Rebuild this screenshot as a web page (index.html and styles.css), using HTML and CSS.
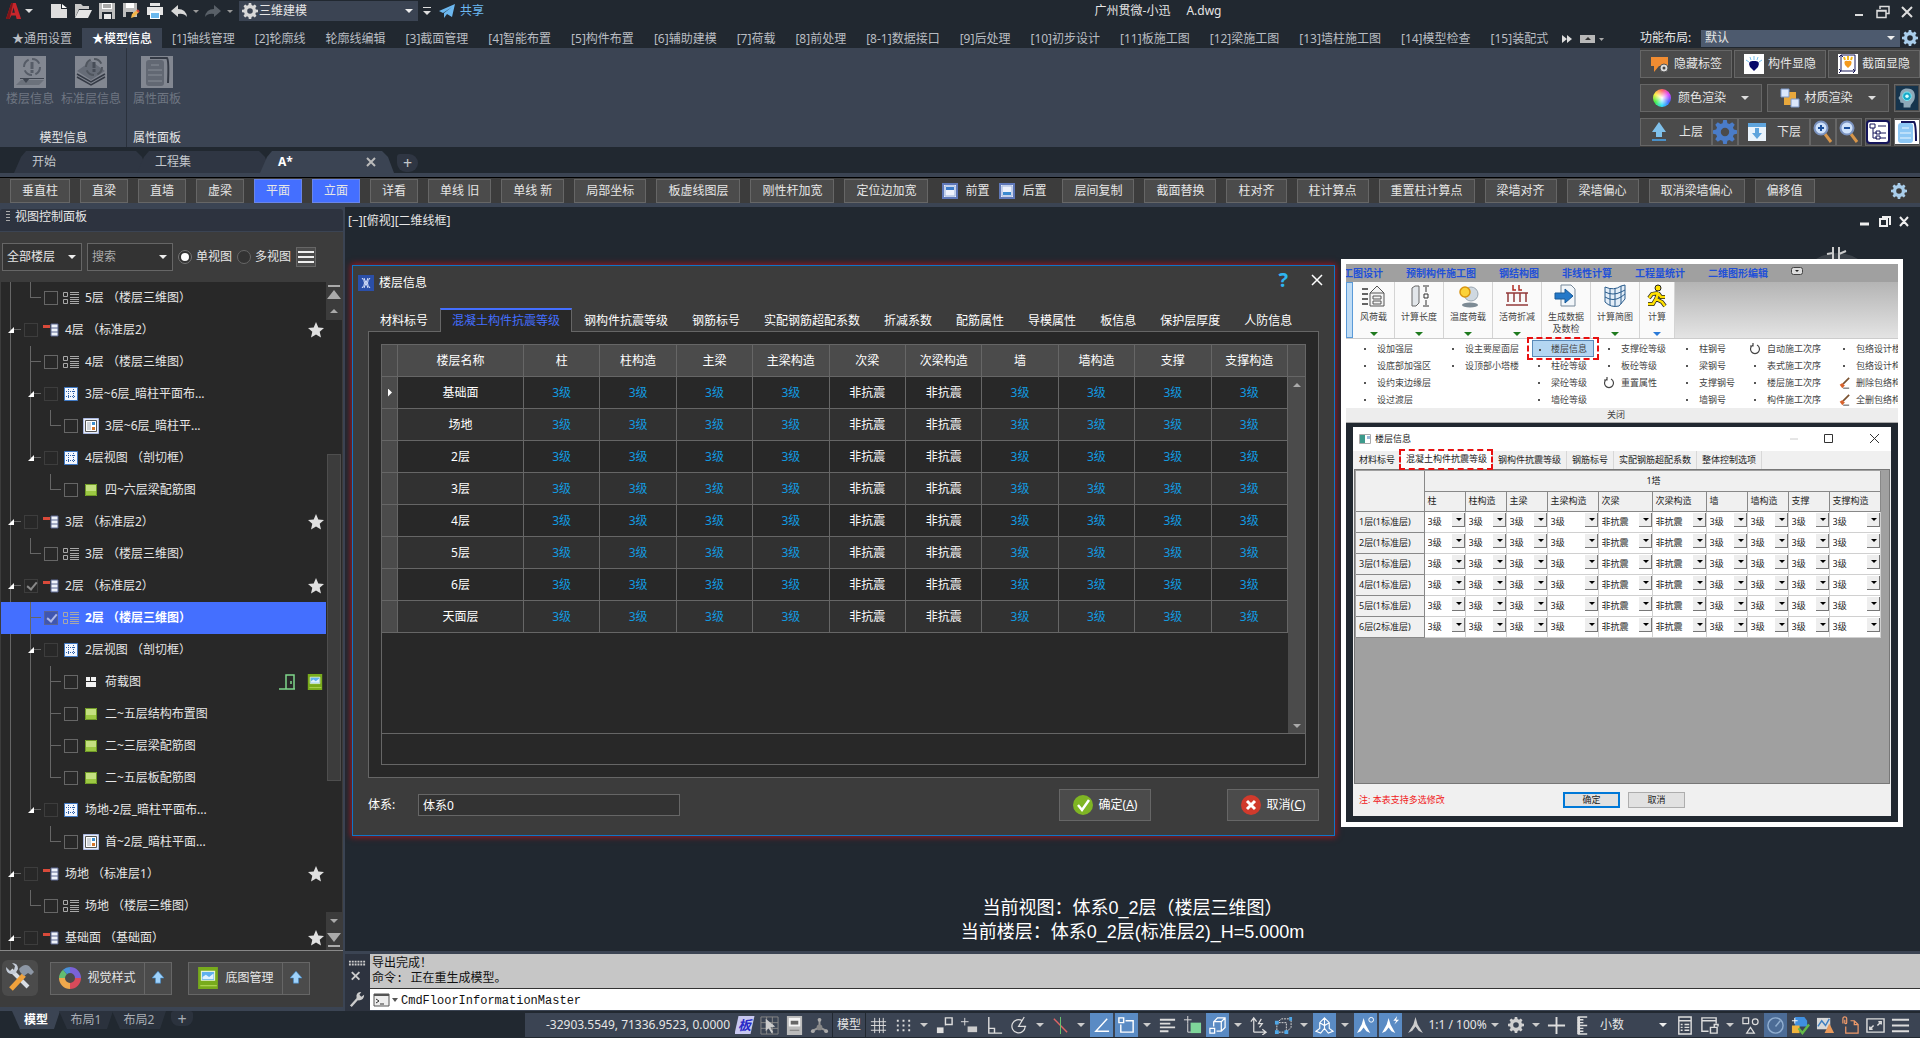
FILE: index.html
```html
<!DOCTYPE html>
<html lang="zh-CN">
<head>
    <meta charset="UTF-8">
    <meta name="viewport" content="width=device-width, initial-scale=1.0">
    <title>广州贯微-小迅 A.dwg</title>
    <link rel="stylesheet" href="styles.css">
</head>
<body>
    <!-- 图标 -->
    <svg class="sprite" aria-hidden="true">
        <symbol id="gear" viewBox="0 0 16 16"><path fill-rule="evenodd" d="M6.8 0h2.4l.4 2.1 1.4.6L12.8 1.500l1.700 1.700-1.200 1.800.6 1.400 2.100.4v2.400l-2.100.4-.6 1.400 1.200 1.800-1.700 1.700-1.800-1.200-1.400.6-.4 2.100H6.800l-.4-2.100-1.400-.6-1.800 1.200-1.700-1.700 1.200-1.800-.6-1.400L0 9.200V6.800l2.100-.4.6-1.400-1.200-1.800 1.700-1.700L5 2.700l1.400-.6zM8 5.200a2.800 2.800 0 1 0 0 5.600 2.800 2.800 0 0 0 0-5.600z"/></symbol>
        <symbol id="list" viewBox="0 0 16 14"><path d="M.5 1.500h4v4h-4zM.5 8.500h4v4h-4zM7 1.500h9M7 3.500h9M7 6.500h9M7 8.500h9M7 10.500h9M7 12.500h9" fill="none" stroke="#a8a8a8"/></symbol>
        <symbol id="floor" viewBox="0 0 16 14"><path d="M0 2h7v3H0z" fill="#d94a3a"/><path d="M8 1h7v12H8z" fill="#eef2fa" stroke="#5a6690"/><path d="M8 5h7M8 9h7" stroke="#5a6690"/></symbol>
        <symbol id="cut" viewBox="0 0 16 16"><path d="M1.500 1.500h13v13h-13z" fill="#f2f7ff" stroke="#3f79c4"/><path d="M3 5.500h10M3 10.500h10M5.500 3v10M10.500 3v10" stroke="#2c5fa8" stroke-dasharray="1 1"/></symbol>
        <symbol id="form" viewBox="0 0 16 16"><path d="M.5.5h15v15H.5z" fill="#e8edf8" stroke="#aab8e0"/><path d="M2.500 2.500h11v11h-11z" fill="#fff" stroke="#555"/><path d="M4 4h4v8H4z" fill="#cfd4da"/><path d="M9 4h3v3H9z" fill="#3c8ccc"/><path d="M9 9h3v3H9z" fill="#d4762c"/></symbol>
        <symbol id="green" viewBox="0 0 16 16"><path d="M2 2h12v12H2z" fill="#9cc843"/><path d="M3 3h10v6H3z" fill="#c4e080"/><path d="M2.500 2.500h11v11h-11z" fill="none" stroke="#6f9a26"/></symbol>
        <symbol id="load" viewBox="0 0 16 16"><path d="M3 3h4v4H3zM8 3h5v4H8zM3 8h10v5H3z" fill="#f2f2f2"/></symbol>
        <symbol id="star" viewBox="0 0 16 16"><path d="M8 0l2.300 5.400 5.700.5-4.300 3.800 1.300 5.800L8 12.400l-5 3.100 1.300-5.800L0 5.900l5.700-.5z" fill="#e0e0e0"/></symbol>
        <symbol id="photo" viewBox="0 0 20 20"><path d="M1 0h18v20H1z" fill="#78ab1c"/><path d="M3 17h15" stroke="#b5da5a" stroke-width="1"/><path d="M4 4h12v8H4z" fill="#5fb0ee" stroke="#e8f4d8"/><path d="M5 9l3-2 3 2 4-3v5H5z" fill="#dff1ff"/></symbol>
        <symbol id="uparrow" viewBox="0 0 14 16"><path d="M7 0l7 8h-4v6H4V8H0z" fill="#9fd2fb" stroke="#3e86c8" stroke-width=".7"/></symbol>
        <symbol id="glass" viewBox="0 0 20 24"><path d="M12 14l6 8" stroke="#d8964a" stroke-width="3"/><circle cx="8" cy="8" r="6.500" fill="#cfe2fb" stroke="#7b93c0" stroke-width="2"/></symbol>
        <symbol id="win" viewBox="0 0 16 16"><path d="M1 1h14v14H1z" fill="#e6ecfa" stroke="#5f78b8" stroke-width="2"/><path d="M3 3h10v10H3z" fill="#eef2fc" stroke="#9fb4dc"/></symbol>
        <symbol id="redo-ring" viewBox="0 0 12 12"><path d="M4 2a4.500 4.500 0 1 0 4 0M4 0v3h-3" fill="none" stroke="#444" stroke-width="1.200"/></symbol>
        <symbol id="broom" viewBox="0 0 14 14"><path d="M13 1L6 8" stroke="#7a5230" stroke-width="2"/><path d="M2 9l3-2 3 3-3 3z" fill="#d8622c"/><path d="M6 13h7" stroke="#333"/></symbol>
        <symbol id="plotman" viewBox="0 0 16 18"><path d="M8 1l2 7 5 8-4-2-3-4-3 4-4 2 5-8z" fill="currentColor"/></symbol>
    </svg>

    <div class="titlebar">
        <div class="quick">
            <svg class="logo" viewBox="0 0 18 18"><path d="M0 18L6 0h5l6 18h-5l-1-4H6l-2 4zM7 11h3L8.500 5z" fill="#c8262c"/><path d="M0 18L6 0h2L4 18z" fill="#7e1518"/></svg>
            <i class="caret"></i>
            <svg viewBox="0 0 18 16"><path d="M1 1h10v5h6v9H1z" fill="#dedede"/><path d="M12 1l5 4h-5z" fill="#fff"/></svg>
            <svg viewBox="0 0 18 16"><path d="M1 15V1h6l2 2h6v3H5z" fill="#c8c8c8"/><path d="M5 7h13l-4 8H1z" fill="#e6e6e6"/></svg>
            <svg viewBox="0 0 18 16"><path d="M1 0h16v16H1z" fill="#bdbdbd"/><path d="M4 0h10v6H4z" fill="#fff"/><path d="M5 2h8M5 4h8" stroke="#555"/><path d="M4 9h10v7H4z" fill="#212830"/><path d="M6 11h7v5H6z" fill="#e8e8e8"/></svg>
            <svg viewBox="0 0 18 16"><path d="M1 0h14v14H1z" fill="#bdbdbd"/><path d="M4 0h8v5H4z" fill="#fff"/><path d="M4 9h7v5H4z" fill="#212830"/><path d="M9 15l1-4 5-4 2 2-5 5z" fill="#f3b54a"/><path d="M15 7l2 2" stroke="#d94a3a" stroke-width="2"/></svg>
            <svg viewBox="0 0 18 16"><path d="M4 0h10v3H4zM1 4h16v8H1z" fill="#e4e4e4"/><path d="M4 8h10v8H4z" fill="#fff"/><path d="M5 10h8v5H5z" fill="#6cb9ee"/></svg>
            <svg viewBox="0 0 18 16"><path d="M1 8l7-6v4q8 0 9 8-3-4-9-3v3z" fill="#d8d8d8"/></svg>
            <i class="caret small"></i>
            <svg viewBox="0 0 18 16"><path d="M17 8l-7-6v4q-8 0-9 8 3-4 9-3v3z" fill="#596068"/></svg>
            <i class="caret small"></i>
        </div>
        <label class="combo workspace">
            <svg fill="#d8d8d8"><use href="#gear"/></svg>
            <select aria-label="工作空间"><option>三维建模</option></select>
        </label>
        <i class="caret bar"></i>
        <a href="#" class="share"><svg viewBox="0 0 16 14"><path d="M0 7L16 0l-3 13-5-3-3 4V9l8-6-9 6z" fill="#6cb8f0"/></svg>共享</a>
        <div class="title">广州贯微-小迅<span>A.dwg</span></div>
        <div class="win-buttons">
            <button aria-label="最小化"><svg viewBox="0 0 14 14"><path d="M3 10h8" stroke="#ddd" stroke-width="2"/></svg></button>
            <button aria-label="还原"><svg viewBox="0 0 14 14"><path d="M4 4V1.500h9v7h-3M1 5.500h9v7H1zM1 6h9" fill="none" stroke="#ddd" stroke-width="1.500"/></svg></button>
            <button aria-label="关闭"><svg viewBox="0 0 14 14"><path d="M2 2l10 10M12 2L2 12" stroke="#ddd" stroke-width="2"/></svg></button>
        </div>
    </div>

    <div class="ribbon">
        <div class="ribbon-left">
            <nav class="ribbon-tabs">
                <a href="#">★通用设置</a>
                <a href="#" class="active">★模型信息</a>
                <a href="#">[1]轴线管理</a>
                <a href="#">[2]轮廓线</a>
                <a href="#">轮廓线编辑</a>
                <a href="#">[3]截面管理</a>
                <a href="#">[4]智能布置</a>
                <a href="#">[5]构件布置</a>
                <a href="#">[6]辅助建模</a>
                <a href="#">[7]荷载</a>
                <a href="#">[8]前处理</a>
                <a href="#">[8-1]数据接口</a>
                <a href="#">[9]后处理</a>
                <a href="#">[10]初步设计</a>
                <a href="#">[11]板施工图</a>
                <a href="#">[12]梁施工图</a>
                <a href="#">[13]墙柱施工图</a>
                <a href="#">[14]模型检查</a>
                <a href="#">[15]装配式</a>
                <svg class="more" viewBox="0 0 42 10"><path d="M0 1l5 4-5 4zM5 1l5 4-5 4z" fill="#ddd"/><path d="M18 1h15v8H18z" fill="#b8b8b8"/><path d="M23 6l3-3 3 3z" fill="#333"/><path d="M37 4h5l-2.500 3z" fill="#aaa"/></svg>
            </nav>
            <div class="ribbon-body">
                <section class="ribbon-group">
                    <div class="tools">
                        <button disabled><svg viewBox="0 0 32 32"><path d="M0 0h32v32H0z" fill="#828791"/><circle cx="18" cy="11" r="8" fill="none" stroke="#565c67" stroke-width="2" stroke-dasharray="9 3.500"/><path d="M18 6v7M18 14v3" stroke="#565c67" stroke-width="3"/><path d="M7 24h23l-5 5H2z" fill="#6b717b"/><path d="M6 22.500h24" stroke="#3f4550"/><path d="M8 22h8l-4 5z" fill="#3f4550"/></svg>楼层信息</button>
                        <button disabled><svg viewBox="0 0 32 32"><path d="M0 0h32v32H0z" fill="#828791"/><path d="M16 5l14 10-14 9L2 15z" fill="#666c77"/><path d="M2 18l14 8 14-8M2 21l14 8 14-8" fill="none" stroke="#343a45" stroke-width="1.500"/><circle cx="19" cy="11" r="8" fill="none" stroke="#50565f" stroke-width="2" stroke-dasharray="9 3.500"/><path d="M19 6v6M19 13v3" stroke="#464c57" stroke-width="3"/></svg>标准层信息</button>
                    </div>
                    <h3>模型信息</h3>
                </section>
                <section class="ribbon-group">
                    <div class="tools">
                        <button disabled><svg viewBox="0 0 32 32"><path d="M0 0h32v32H0z" fill="#828791"/><path d="M9 2h17q2 2 1 25" fill="none" stroke="#343a45" stroke-width="2"/><rect x="5" y="4" width="18" height="26" rx="3" fill="#626873"/><path d="M10 9h8M7 14h14M7 19h14M7 25h14" stroke="#878d97"/></svg>属性面板</button>
                    </div>
                    <h3>属性面板</h3>
                </section>
            </div>
        </div>

        <aside class="display-panel">
            <div class="layout-line">
                <label for="layout">功能布局:</label>
                <div class="combo"><select id="layout"><option>默认</option></select></div>
                <svg fill="#a9cdea"><use href="#gear"/></svg>
            </div>
            <div class="panel-row">
                <button><svg viewBox="0 0 20 20"><path d="M1 3h17v9H9l-5 6v-6H1z" fill="#f08c32"/><circle cx="14" cy="14" r="4" fill="#ddd" stroke="#555"/><circle cx="14" cy="14" r="1.500" fill="#444"/></svg>隐藏标签</button>
                <button><svg viewBox="0 0 20 20"><path d="M0 0h20v20H0z" fill="#fff"/><path d="M10 17l-4-4q-3-7 4-6 7-1 4 6z" fill="#08086a"/><path d="M10 2v4M6 3l1 3M14 3l-1 3M2 6l3 2M18 6l-3 2" stroke="#79c2ef"/></svg>构件显隐</button>
                <button><svg viewBox="0 0 20 20"><path d="M0 0h20v20H0z" fill="#fff"/><path d="M3 1v16h14V1zM1 3l2-2 2 2M1 15l2 2-2 2M15 15l2 2-2 2" fill="none" stroke="#1a1a5a"/><path d="M10 14l-3-3q-2-5 3-4 5-1 3 4z" fill="#f59a1c"/><path d="M10 2v4M6 3l1 3M14 3l-1 3" stroke="#f5b81c" stroke-width="2"/></svg>截面显隐</button>
            </div>
            <div class="panel-row wide">
                <button><span class="wheel"></span>颜色渲染<i class="caret"></i></button>
                <button><svg viewBox="0 0 20 20"><path d="M4 4h12v13H4z" fill="#e8a83c"/><path d="M1 1h8v8H1zM11 11h8v8h-8z" fill="#dbe7fb" stroke="#7d98c8"/></svg>材质渲染<i class="caret"></i></button>
                <button class="square"><svg class="big" viewBox="0 0 26 28"><path d="M0 0h26v28H0z" fill="#16344c"/><path d="M13 3c8 0 10 6 9 11-1 6-5 6-5 11H9v-5c-3 0-4 0-4-3l-2-3 2-3C5 6 8 3 13 3z" fill="#8fa9b8"/><circle cx="13" cy="12" r="5" fill="#19a8c8" stroke="#7ff0f8"/><circle cx="13" cy="12" r="2" fill="#dff"/></svg></button>
            </div>
            <div class="panel-row floors">
                <button class="level"><svg viewBox="0 0 20 20"><path d="M10 0l7 10h-4v5H7v-5H3z" fill="#7fc0ea"/><path d="M3 18h14" stroke="#4a90c8" stroke-width="2"/></svg>上层</button>
                <button class="square"><svg class="big" fill="#4a7cc8"><use href="#gear"/></svg></button>
                <button class="level"><svg viewBox="0 0 20 20"><path d="M1 1h18v18H1z" fill="#eaf3fb"/><path d="M1 1h18v4H1z" fill="#5fa4dc"/><path d="M8 6h4v5h3l-5 6-5-6h3z" fill="#5fa4dc"/></svg>下层</button>
                <button class="square"><svg class="big" viewBox="0 0 20 24"><use href="#glass"/><path d="M5 8h6M8 5v6" stroke="#1c4f9a" stroke-width="2"/></svg></button>
                <button class="square"><svg class="big" viewBox="0 0 20 24"><use href="#glass"/><path d="M5 8h6" stroke="#1c4f9a" stroke-width="2"/></svg></button>
                <button class="square apart"><svg class="big" viewBox="0 0 24 24"><rect x="1" y="1" width="22" height="22" rx="3" fill="#fff" stroke="#14145a" stroke-width="2"/><path d="M4 4h5v4H4zM12 6h8M7 8v10h4M7 13h4M14 13h6M14 18h6M10 11h4v3h-4zM10 16h4v3h-4z" fill="none" stroke="#14145a"/></svg></button>
                <button class="square apart"><svg class="big" viewBox="0 0 24 24"><path d="M0 0h24v24H0z" fill="#fff"/><path d="M6 2h13q2 2 2 19" fill="none" stroke="#14145a" stroke-width="2"/><rect x="3" y="3" width="15" height="20" rx="3" fill="#8ec8f5"/><path d="M7 8h7M5 13h11M5 18h11" stroke="#eaf6ff"/></svg></button>
            </div>
        </aside>
    </div>

    <nav class="file-tabs">
        <a href="#">开始</a>
        <a href="#">工程集</a>
        <a href="#" class="active">A*<svg viewBox="0 0 10 10"><path d="M1 1l8 8M9 1L1 9" stroke="#bbb" stroke-width="2"/></svg></a>
        <button class="new-tab" aria-label="新建">+</button>
    </nav>

    <div class="toolbar">
        <button>垂直柱</button>
        <button>直梁</button>
        <button>直墙</button>
        <button>虚梁</button>
        <button class="on">平面</button>
        <button class="on">立面</button>
        <button>详看</button>
        <button>单线 旧</button>
        <button>单线 新</button>
        <button>局部坐标</button>
        <button>板虚线图层</button>
        <button>刚性杆加宽</button>
        <button>定位边加宽</button>
        <button class="flat"><svg viewBox="0 0 16 16"><use href="#win"/><path d="M4 4h8v3H4z" fill="#3a7ac8"/></svg>前置</button>
        <button class="flat"><svg viewBox="0 0 16 16"><use href="#win"/><path d="M4 9h8v3H4z" fill="#3a8ad0"/></svg>后置</button>
        <button class="after-flat">层间复制</button>
        <button>截面替换</button>
        <button>柱对齐</button>
        <button>柱计算点</button>
        <button>重置柱计算点</button>
        <button>梁墙对齐</button>
        <button>梁墙偏心</button>
        <button>取消梁墙偏心</button>
        <button>偏移值</button>
        <svg class="settings" fill="#a9cdea"><use href="#gear"/></svg>
    </div>

    <main class="workarea">
        <aside class="view-panel">
            <h2>视图控制面板</h2>
            <div class="filters">
                <div class="combo boxed"><select aria-label="楼层"><option>全部楼层</option></select></div>
                <div class="combo boxed search"><select aria-label="搜索"><option>搜索</option></select></div>
                <label><input type="radio" name="view" checked>单视图</label>
                <label><input type="radio" name="view">多视图</label>
                <button class="menu" aria-label="菜单"><i></i><i></i><i></i></button>
            </div>

            <div class="tree-box">
                <ul class="tree">
                    <li>
                        <ul>
                            <li><div class="row"><span class="exp"></span><label><input type="checkbox"><svg><use href="#list"/></svg>5层 （楼层三维图）</label></div></li>
                        </ul>
                    </li>
                    <li>
                        <div class="row"><button class="exp"></button><label><input type="checkbox" disabled><svg><use href="#floor"/></svg>4层 （标准层2）</label><svg class="star"><use href="#star"/></svg></div>
                        <ul>
                            <li><div class="row"><span class="exp"></span><label><input type="checkbox"><svg><use href="#list"/></svg>4层 （楼层三维图）</label></div></li>
                            <li>
                                <div class="row"><button class="exp"></button><label><input type="checkbox" disabled><svg><use href="#cut"/></svg>3层~6层_暗柱平面布...</label></div>
                                <ul>
                                    <li><div class="row"><span class="exp"></span><label><input type="checkbox"><svg><use href="#form"/></svg>3层~6层_暗柱平...</label></div></li>
                                </ul>
                            </li>
                            <li>
                                <div class="row"><button class="exp"></button><label><input type="checkbox" disabled><svg><use href="#cut"/></svg>4层视图 （剖切框）</label></div>
                                <ul>
                                    <li><div class="row"><span class="exp"></span><label><input type="checkbox"><svg><use href="#green"/></svg>四~六层梁配筋图</label></div></li>
                                </ul>
                            </li>
                        </ul>
                    </li>
                    <li>
                        <div class="row"><button class="exp"></button><label><input type="checkbox" disabled><svg><use href="#floor"/></svg>3层 （标准层2）</label><svg class="star"><use href="#star"/></svg></div>
                        <ul>
                            <li><div class="row"><span class="exp"></span><label><input type="checkbox"><svg><use href="#list"/></svg>3层 （楼层三维图）</label></div></li>
                        </ul>
                    </li>
                    <li>
                        <div class="row"><button class="exp"></button><label><input type="checkbox" disabled checked><svg><use href="#floor"/></svg>2层 （标准层2）</label><svg class="star"><use href="#star"/></svg></div>
                        <ul>
                            <li><div class="row selected"><span class="exp"></span><label><input type="checkbox" checked><svg><use href="#list"/></svg>2层 （楼层三维图）</label></div></li>
                            <li>
                                <div class="row"><button class="exp"></button><label><input type="checkbox" disabled><svg><use href="#cut"/></svg>2层视图 （剖切框）</label></div>
                                <ul>
                                    <li><div class="row"><span class="exp"></span><label><input type="checkbox"><svg><use href="#load"/></svg>荷载图</label>
                                        <span class="row-icons">
                                            <svg viewBox="0 0 16 16"><path d="M7 15V1h8v14M12 7v3M0 15h16" fill="none" stroke="#7fd68a" stroke-width="1.500"/></svg>
                                            <svg><use href="#photo"/></svg>
                                        </span></div></li>
                                    <li><div class="row"><span class="exp"></span><label><input type="checkbox"><svg><use href="#green"/></svg>二~五层结构布置图</label></div></li>
                                    <li><div class="row"><span class="exp"></span><label><input type="checkbox"><svg><use href="#green"/></svg>二~三层梁配筋图</label></div></li>
                                    <li><div class="row"><span class="exp"></span><label><input type="checkbox"><svg><use href="#green"/></svg>二~五层板配筋图</label></div></li>
                                </ul>
                            </li>
                            <li>
                                <div class="row"><button class="exp"></button><label><input type="checkbox" disabled><svg><use href="#cut"/></svg>场地-2层_暗柱平面布...</label></div>
                                <ul>
                                    <li><div class="row"><span class="exp"></span><label><input type="checkbox"><svg><use href="#form"/></svg>首~2层_暗柱平面...</label></div></li>
                                </ul>
                            </li>
                        </ul>
                    </li>
                    <li>
                        <div class="row"><button class="exp"></button><label><input type="checkbox" disabled><svg><use href="#floor"/></svg>场地 （标准层1）</label><svg class="star"><use href="#star"/></svg></div>
                        <ul>
                            <li><div class="row"><span class="exp"></span><label><input type="checkbox"><svg><use href="#list"/></svg>场地 （楼层三维图）</label></div></li>
                        </ul>
                    </li>
                    <li>
                        <div class="row"><button class="exp"></button><label><input type="checkbox" disabled><svg><use href="#floor"/></svg>基础面 （基础面）</label><svg class="star"><use href="#star"/></svg></div>
                    </li>
                </ul>
                <div class="scroll">
                    <svg viewBox="0 0 16 38"><path d="M2 4h12" stroke="#aaa" stroke-width="2"/><path d="M1 17l7-9 7 9zM4 31l4-4 4 4z" fill="#aaa"/></svg>
                    <div class="track"><div class="thumb"></div></div>
                    <svg viewBox="0 0 16 38"><path d="M4 7h8l-4 4zM1 21h14l-7 9z" fill="#aaa"/><path d="M2 34h12" stroke="#aaa" stroke-width="2"/></svg>
                </div>
            </div>

            <div class="view-buttons">
                <button class="wrench" aria-label="工具"><svg viewBox="0 0 30 30"><path d="M6 7l17 17" stroke="#d8dde4" stroke-width="4"/><path d="M1 4l4 4 4-1 1-4-3-3q6 0 6 6l-3 5H6Q1 10 1 4z" fill="#c4ccd8"/><path d="M19 12L6 26" stroke="#f0a23c" stroke-width="5"/><path d="M14 6q5-6 10-3l5 6-3 3-3-2-4 3-4-4z" fill="#8d97a5"/></svg></button>
                <div class="split">
                    <button><svg viewBox="0 0 22 22"><g fill="none" stroke-width="6"><path d="M11 3a8 8 0 0 1 8 8" stroke="#7a62d8"/><path d="M19 11a8 8 0 0 1-8 8" stroke="#d84a5a"/><path d="M11 19a8 8 0 0 1-8-8" stroke="#efa84c"/><path d="M3 11a8 8 0 0 1 3-6" stroke="#62bd72"/><path d="M6 5a8 8 0 0 1 5-2" stroke="#4a90d8"/></g></svg>视觉样式</button>
                    <button class="up" aria-label="展开"><svg><use href="#uparrow"/></svg></button>
                </div>
                <div class="split">
                    <button><svg><use href="#photo"/></svg>底图管理</button>
                    <button class="up" aria-label="展开"><svg><use href="#uparrow"/></svg></button>
                </div>
            </div>
        </aside>

        <div class="center">
            <div class="canvas">
                <div class="view-head">
                    <span>[−][俯视][二维线框]</span>
                    <svg viewBox="0 0 52 14"><path d="M1 10h9" stroke="#eee" stroke-width="3"/><path d="M21 5h7v7h-7zM23 3h8v8M41 3l8 9M49 3l-8 9" fill="none" stroke="#eee" stroke-width="2"/></svg>
                </div>
                <svg class="compass" viewBox="0 0 80 80"><circle cx="40" cy="46" r="40" fill="#3c4249"/><path d="M36 0v14M42 0v14M36 6l-6 1M42 7l7-3" stroke="#ccc" stroke-width="2"/></svg>
                <div class="view-note">
                    <p>当前视图：体系0_2层（楼层三维图）</p>
                    <p>当前楼层：体系0_2层(标准层2)_H=5.000m</p>
                </div>

                <div class="dialog" role="dialog" aria-labelledby="dlg-title">
                    <div class="dlg-title">
                        <svg viewBox="0 0 16 16"><path d="M0 0h16v16H0z" fill="#2b4fa8"/><path d="M4 3q5 5 0 10M12 3q-5 5 0 10M6 3l4 10M10 3L6 13" fill="none" stroke="#dfe8ff"/></svg>
                        <h2 id="dlg-title">楼层信息</h2>
                        <button class="help" aria-label="帮助">?</button>
                        <button aria-label="关闭"><svg viewBox="0 0 12 12"><path d="M1 1l10 10M11 1L1 11" stroke="#fff" stroke-width="1.500"/></svg></button>
                    </div>
                    <nav class="dlg-tabs">
                        <a href="#">材料标号</a>
                        <a href="#" class="active">混凝土构件抗震等级</a>
                        <a href="#">钢构件抗震等级</a>
                        <a href="#">钢筋标号</a>
                        <a href="#">实配钢筋超配系数</a>
                        <a href="#">折减系数</a>
                        <a href="#">配筋属性</a>
                        <a href="#">导模属性</a>
                        <a href="#">板信息</a>
                        <a href="#">保护层厚度</a>
                        <a href="#">人防信息</a>
                    </nav>
                    <div class="dlg-body">
                        <div class="grid-box">
                            <div class="grid-view">
                                <table class="levels">
                                    <thead>
                                        <tr><th class="mark"></th><th class="name">楼层名称</th><th>柱</th><th>柱构造</th><th>主梁</th><th>主梁构造</th><th>次梁</th><th>次梁构造</th><th>墙</th><th>墙构造</th><th>支撑</th><th>支撑构造</th></tr>
                                    </thead>
                                    <tbody id="levels"></tbody>
                                </table>
                                <div class="grid-scroll"><i></i><i class="down"></i></div>
                            </div>
                            <div class="grid-foot"></div>
                        </div>
                    </div>
                    <div class="dlg-foot">
                        <label for="system">体系:</label>
                        <input type="text" id="system" value="体系0">
                        <button class="ok"><svg viewBox="0 0 20 20"><circle cx="10" cy="10" r="10" fill="#7fb524"/><path d="M5 10l4 5 7-10" fill="none" stroke="#fff" stroke-width="2.500"/></svg><span>确定(<u>A</u>)</span></button>
                        <button><svg viewBox="0 0 20 20"><circle cx="10" cy="10" r="10" fill="#d13a2c"/><path d="M6 6l8 8M14 6l-8 8" stroke="#fff" stroke-width="3"/></svg><span>取消(<u>C</u>)</span></button>
                    </div>
                </div>

                <div class="inset">
                    <div class="in-tabs">
                        <span>工图设计</span><span>预制构件施工图</span><span>钢结构图</span><span>非线性计算</span><span>工程量统计</span><span>二维图形编辑</span>
                        <svg viewBox="0 0 12 8"><rect x=".5" y=".5" width="11" height="7" rx="2" fill="#ddd" stroke="#444"/><path d="M4 3h4L6 5z" fill="#222"/></svg>
                    </div>
                    <div class="in-ribbon">
                        <i class="in-on"></i>
                        <button class="first"><svg viewBox="0 0 24 24"><path d="M8 22V9l7-7 7 7v13zM8 9h14M11 12h8v3h-8zM11 17h8v3h-8z" fill="#f4f4f4" stroke="#555"/><path d="M0 5h6M0 10h6M0 15h6M0 20h6" stroke="#333" stroke-width="1.500"/></svg>风荷载<i></i></button>
                        <button><svg viewBox="0 0 24 24"><path d="M5 4l3-2h4v17l-3 3H5z" fill="#e2e6ea" stroke="#666"/><path d="M16 2h6M16 22h6M19 3v5M19 16v5M17 10h4v4h-4z" fill="none" stroke="#333"/></svg>计算长度<i></i></button>
                        <button><svg viewBox="0 0 24 24"><ellipse cx="14" cy="21" rx="8" ry="2.500" fill="#7c8a94"/><circle cx="15" cy="10" r="7" fill="#cfd8e0" stroke="#9aa6b0"/><circle cx="9" cy="8" r="5" fill="#fbd23a" stroke="#d89410" stroke-width="1.500"/></svg>温度荷载<i></i></button>
                        <button><svg viewBox="0 0 24 24"><path d="M8 1v5h3M14 1v5h3" fill="none" stroke="#b02a20" stroke-width="1.500"/><path d="M1 9h22M3 9v9M9 9v9M15 9v9M21 9v9M1 21h22" stroke="#933a3a" stroke-width="1.500"/></svg>活荷折减<i></i></button>
                        <button><svg viewBox="0 0 24 24"><path d="M7 1h10l4 4v17H7z" fill="#f2f6fa" stroke="#789"/><path d="M1 9h10V5l8 7-8 7v-4H1z" fill="#2478c8" stroke="#185a98"/></svg>生成数据<br>及数检</button>
                        <button><svg viewBox="0 0 24 24"><path d="M2 3q9 4 16-1l4-1v14l-6 7Q8 24 2 18z" fill="#e4eef8" stroke="#2a5c8c"/><path d="M2 8q8 4 16 0l4-2M2 13q8 5 16 0l4-3M7 4v17M12 4v18M18 2v18" fill="none" stroke="#2a5c8c"/></svg>计算简图<i></i></button>
                        <button class="last"><svg viewBox="0 0 24 24"><circle cx="13" cy="4" r="3" fill="#ffe000" stroke="#222"/><path d="M13 9l-6 1-3 4M13 9l3 4h4M13 10l-2 5 6 3 3 4M11 15l-3 5H3" fill="none" stroke="#222" stroke-width="4"/><path d="M13 9l-6 1-3 4M13 9l3 4h4M13 10l-2 5 6 3 3 4M11 15l-3 5H3" fill="none" stroke="#ffe000" stroke-width="2.500"/></svg>计算<i class="blue"></i></button>
                    </div>
                    <div class="in-lists">
                        <ul><li>设加强层</li><li>设底部加强区</li><li>设约束边缘层</li><li>设过渡层</li></ul>
                        <ul><li>设主要屋面层</li><li>设顶部小塔楼</li></ul>
                        <ul><li class="hot">楼层信息</li><li>柱砼等级</li><li>梁砼等级</li><li>墙砼等级</li></ul>
                        <ul><li>支撑砼等级</li><li>板砼等级</li><li class="pic"><svg><use href="#redo-ring"/></svg>重置属性</li></ul>
                        <ul><li>柱钢号</li><li>梁钢号</li><li>支撑钢号</li><li>墙钢号</li></ul>
                        <ul><li class="pic"><svg><use href="#redo-ring"/></svg>自动施工次序</li><li>表式施工次序</li><li>楼层施工次序</li><li>构件施工次序</li></ul>
                        <ul><li>包络设计楼</li><li>包络设计构</li><li class="pic"><svg><use href="#broom"/></svg>删除包络构</li><li class="pic"><svg><use href="#broom"/></svg>全删包络构</li></ul>
                    </div>
                    <div class="in-close">关闭</div>
                    <div class="in-stage">
                        <div class="in-dialog">
                            <div class="in-title">
                                <svg viewBox="0 0 12 10"><path d="M.5.5h11v9H.5z" fill="#fff" stroke="#aaa"/><path d="M1 1h5v8H1z" fill="#3c9a8c"/><path d="M8 2h3v3H8z" fill="#9ab8d8"/></svg>
                                <span>楼层信息</span>
                                <svg class="ctl" viewBox="0 0 90 12"><path d="M0 6h8" stroke="#ccc"/><path d="M34.500 1.500h8v8h-8zM80 1l9 9M89 1l-9 9" fill="none" stroke="#333"/></svg>
                            </div>
                            <div class="in-dtabs"><span>材料标号</span><span class="hot">混凝土构件抗震等级</span><span>钢构件抗震等级</span><span>钢筋标号</span><span>实配钢筋超配系数</span><span>整体控制选项</span></div>
                            <div class="in-grid">
                                <table>
                                    <colgroup><col class="c-name"><col><col><col><col class="c-mid"><col class="c-wide"><col class="c-wide"><col><col><col><col class="c-mid"></colgroup>
                                    <thead>
                                        <tr><th rowspan="2"></th><th colspan="10" class="tower">1塔</th></tr>
                                        <tr><th>柱</th><th>柱构造</th><th>主梁</th><th>主梁构造</th><th>次梁</th><th>次梁构造</th><th>墙</th><th>墙构造</th><th>支撑</th><th>支撑构造</th></tr>
                                    </thead>
                                    <tbody id="old-levels"></tbody>
                                </table>
                            </div>
                            <div class="in-foot">
                                <span>注: 本表支持多选修改</span>
                                <button class="default">确定</button>
                                <button>取消</button>
                            </div>
                        </div>
                    </div>
                </div>
            </div>

            <div class="command">
                <svg class="cmd-side" viewBox="0 0 26 60"><path d="M4 8h18M4 11h18" stroke="#ccc" stroke-width="2" stroke-dasharray="2 1"/><path d="M7 19l8 8M15 19l-8 8" stroke="#ccc" stroke-width="2"/><path d="M6 55l8-9" stroke="#ccc" stroke-width="2.500"/><path d="M12 46q-1-6 5-6l-2 3 2 2 3-2q0 6-6 6z" fill="#ccc"/></svg>
                <div class="cmd-main">
                    <div class="cmd-log"><p>导出完成！</p><p>命令: 正在重生成模型。</p></div>
                    <div class="cmd-line">
                        <svg viewBox="0 0 26 14"><path d="M1 1h15v12H1z" fill="#eee" stroke="#555"/><path d="M1 2h15" stroke="#555" stroke-width="2"/><path d="M3 6l3 2-3 2M7 11h4" fill="none" stroke="#333"/><path d="M19 5h6l-3 4z" fill="#555"/></svg>
                        <input type="text" aria-label="命令" value="CmdFloorInformationMaster">
                    </div>
                </div>
            </div>
        </div>
    </main>

    <footer class="status">
        <nav class="layouts">
            <a href="#" class="active">模型</a>
            <a href="#">布局1</a>
            <a href="#">布局2</a>
            <button aria-label="新建布局">+</button>
        </nav>
        <div class="status-items">
            <span class="coords">-32903.5549, 71336.9523, 0.0000</span>
            <span class="cell"><b class="slab">板</b></span>
            <span class="cell"><svg viewBox="0 0 20 20"><path d="M1 1h18v18H1zM7 1v18M13 1v18M1 7h18M1 13h18" fill="none" stroke="#888"/><path d="M6 3l10 8-5 1 3 5-2 1-3-5-3 3z" fill="#ccc"/></svg></span>
            <span class="cell"><svg viewBox="0 0 20 20"><path d="M2 0h16v20H2z" fill="#bbb"/><path d="M4 2h12v9H4z" fill="#f4f4f4"/><path d="M6 5h8v4H6z" fill="#666"/><path d="M5 15h10" stroke="#777"/></svg></span>
            <span class="cell"><svg viewBox="0 0 20 20"><path d="M10 3v9l-8 4M10 12l8 4" fill="none" stroke="#999" stroke-width="2"/><circle cx="10" cy="4" r="2" fill="#aaa"/><circle cx="10" cy="12" r="3" fill="#888"/><circle cx="3" cy="16" r="2" fill="#aaa"/><circle cx="17" cy="16" r="2" fill="#aaa"/></svg></span>
            <span class="word">模型</span>
            <span class="cell"><svg viewBox="0 0 20 20"><path d="M6 2v16M11 2v16M15 2v16M2 6h16M2 10h16M2 15h16" stroke="#ddd"/></svg></span>
            <span class="cell"><svg viewBox="0 0 20 20"><path d="M3 5h14M3 10h14M3 15h14" stroke="#ddd" stroke-width="2" stroke-dasharray="2 4"/></svg></span>
            <span class="drop"></span>
            <span class="cell"><svg viewBox="0 0 20 20"><path d="M11 10V2h7v7h-7" fill="none" stroke="#ddd" stroke-width="1.500"/><path d="M2 12h7v6H2z" fill="#ddd"/></svg></span>
            <span class="cell"><svg viewBox="0 0 20 20"><path d="M1 6h8M5 2v8" stroke="#ddd"/><path d="M8 11h10v6H8z" fill="#ccc"/></svg></span>
            <span class="cell"><svg viewBox="0 0 20 20"><path d="M4 1v17h14M4 13h6v5" fill="none" stroke="#ddd" stroke-width="1.500"/></svg></span>
            <span class="cell"><svg viewBox="0 0 20 20"><path d="M13 5a7 7 0 1 0 3 6M17 11H9l6-10" fill="none" stroke="#ddd" stroke-width="1.300"/></svg></span>
            <span class="drop"></span>
            <span class="cell"><svg viewBox="0 0 20 20"><path d="M3 3l14 14" stroke="#e06464" stroke-width="1.500"/><path d="M10 1v18" stroke="#6cc870"/></svg></span>
            <span class="drop"></span>
            <span class="cell on"><svg viewBox="0 0 20 20"><path d="M16 3L4 16h14" fill="none" stroke="#fff" stroke-width="1.500"/></svg></span>
            <span class="cell on"><svg viewBox="0 0 20 20"><path d="M4 9v8h13V5H9M2 2h5v5H2z" fill="none" stroke="#fff" stroke-width="1.500"/></svg></span>
            <span class="drop"></span>
            <span class="cell"><svg viewBox="0 0 20 20"><path d="M2 4h16M2 8h11M2 12h16M2 16h9" stroke="#ddd" stroke-width="2"/></svg></span>
            <span class="cell"><svg viewBox="0 0 20 20"><path d="M1 4h8M5 0v8M5 8v9h4" fill="none" stroke="#ddd"/><path d="M8 7h11v11H8z" fill="#7fd69a"/></svg></span>
            <span class="cell on"><svg viewBox="0 0 20 20"><path d="M6 11V6l4-4h8v10l-4 4H9M6 6h8v10M14 6l4-4M2 13h5v5H2z" fill="none" stroke="#fff" stroke-width="1.300"/></svg></span>
            <span class="drop"></span>
            <span class="cell"><svg viewBox="0 0 20 20"><path d="M5 17V3M2 6l3-4 3 4M5 17h12M14 14l4 3-4 3M13 3l-3 5h4l-3 4" fill="none" stroke="#ddd" stroke-width="1.300"/></svg></span>
            <span class="cell"><svg viewBox="0 0 20 20"><path d="M3 7v10h10V7zM3 7l5-4h10v9l-5 5" fill="none" stroke="#ddd" stroke-dasharray="2 1"/><path d="M1 5h4v4H1zM11 15h4v4h-4zM16 1h3v4h-3zM1 15h4v4H1z" fill="#4fa8e8"/></svg></span>
            <span class="drop"></span>
            <span class="cell on"><svg viewBox="0 0 20 20"><path d="M10 2l5 5v6l4 3-5 2-4-5-4 5-5-2 4-3V7zM10 2v11M5 7l5 3 5-3" fill="none" stroke="#fff" stroke-width="1.200"/></svg></span>
            <span class="drop"></span>
            <span class="cell on"><svg viewBox="0 0 20 20"><path d="M8 2l2 7 5 9-4-2-3-4-3 4-4 2 5-9z" fill="#fff"/><circle cx="16" cy="4" r="2.500" fill="none" stroke="#fff"/></svg></span>
            <span class="cell on"><svg viewBox="0 0 20 20"><path d="M8 2l2 7 5 9-4-2-3-4-3 4-4 2 5-9zM17 0l-4 5h3l-2 4 5-5h-3z" fill="#fff"/></svg></span>
            <span class="cell light"><svg><use href="#plotman"/></svg></span>
            <span class="word scale">1:1 / 100%</span>
            <span class="drop"></span>
            <span class="cell"><svg class="g16" fill="#d0d0d0"><use href="#gear"/></svg></span>
            <span class="drop"></span>
            <span class="cell"><svg viewBox="0 0 20 20"><path d="M1 10h18M10 1v18" stroke="#ddd" stroke-width="2"/></svg></span>
            <span class="cell"><svg viewBox="0 0 20 20"><path d="M6 1h10M6 4h6M6 7h6M6 10h10M6 13h6M6 16h6M6 19h10" stroke="#ddd" stroke-width="1.500"/><path d="M7 1v18" stroke="#ddd" stroke-width="3"/></svg></span>
            <div class="combo units"><select aria-label="单位"><option>小数</option></select></div>
            <span class="cell"><svg viewBox="0 0 20 20"><path d="M4 1h13v18H4zM4 5h13M6 9h2M10 9h5M6 12h2M10 12h5M6 15h2M10 15h5" fill="none" stroke="#ddd" stroke-width="1.500"/></svg></span>
            <span class="cell"><svg viewBox="0 0 20 20"><path d="M9 16H2V2h15v6M2 5h15M11 12h7v6h-7zM15 12V9h4v2" fill="none" stroke="#ddd" stroke-width="1.500"/></svg></span>
            <span class="drop"></span>
            <span class="cell"><svg viewBox="0 0 20 20"><path d="M2 2h6v6H2zM6 18l4-6 4 6z" fill="none" stroke="#ddd" stroke-width="1.300"/><circle cx="15" cy="6" r="3" fill="none" stroke="#ddd" stroke-width="1.300"/></svg></span>
            <span class="cell on dim"><svg viewBox="0 0 20 20"><circle cx="10" cy="10" r="8" fill="none" stroke="#91aecf" stroke-width="1.500"/><path d="M10 11l5-6" stroke="#91aecf" stroke-width="1.500"/></svg></span>
            <span class="cell"><svg viewBox="0 0 20 20"><path d="M4 1h10l3 4v6H4z" fill="#3f8fe0"/><path d="M1 10h8v8H1z" fill="#f0b43c"/><path d="M8 13l4 5 7-9" fill="none" stroke="#62b848" stroke-width="2.500"/><path d="M1 5h6M4 2v6" stroke="#fff"/></svg></span>
            <span class="cell"><svg viewBox="0 0 20 20"><path d="M1 2h14v12H1z" fill="#d8d8d8"/><path d="M2 11l4-6 4 5 4-7" fill="none" stroke="#3f7fc0" stroke-width="1.500"/><path d="M14 8l5 10H9z" fill="#e89a5c"/></svg></span>
            <span class="cell"><svg viewBox="0 0 20 20"><path d="M5 11v7h13V9l-4-4h-4M14 5v4h4M2 8V3q0-2 2-2t2 2v4q0 1-1 1t-1-1V4" fill="none" stroke="#ef9a6a" stroke-width="1.300"/></svg></span>
            <span class="cell"><svg viewBox="0 0 20 20"><path d="M1 3h18v14H1zM4 11v3h3M16 9V6h-3M5 13l3-3M15 7l-3 3" fill="none" stroke="#ddd" stroke-width="1.500"/></svg></span>
            <span class="cell"><svg viewBox="0 0 20 20"><path d="M1 4h18M1 10h18M1 16h18" stroke="#ddd" stroke-width="2"/></svg></span>
        </div>
    </footer>

    <script src="script.js"></script>
</body>
</html>
```
FILE: styles.css
```css
* {
    box-sizing: border-box;
}

body {
    display: flex;
    flex-direction: column;
    height: 100vh;
    margin: 0;
    overflow: hidden;
    background-color: #3b4453;
    color: #e6e6e6;
    font-family: "Noto Sans", "Noto Sans CJK SC", sans-serif;
    font-size: 12px;
    line-height: 16px;
    white-space: nowrap;
}

button, input, select {
    font: inherit;
    color: inherit;
    margin: 0;
}

button {
    display: flex;
    align-items: center;
    justify-content: center;
    padding: 0;
    border: 1px solid #666;
    background-color: #4b4b4b;
}

a {
    color: inherit;
    text-decoration: none;
}

h2, h3, p, ul {
    margin: 0;
    padding: 0;
    font-size: inherit;
    font-weight: normal;
    list-style: none;
}

svg {
    flex: none;
    width: 16px;
    height: 16px;
}

.sprite {
    position: absolute;
    width: 0;
    height: 0;
}

/* 下拉框 */
.combo {
    position: relative;
    display: flex;
    align-items: center;
}

.combo select {
    appearance: none;
    flex: 1;
    min-width: 0;
    height: 100%;
    padding: 0 4px;
    border: none;
    background: none;
    outline: none;
}

.combo::after {
    content: "";
    position: absolute;
    right: 5px;
    top: 50%;
    margin-top: -2px;
    border: 4px solid transparent;
    border-top-color: #eee;
    border-bottom: none;
    pointer-events: none;
}

.caret {
    border: 4px solid transparent;
    border-top-color: #ddd;
    border-bottom: none;
}

.caret.small {
    border-width: 3px;
    border-top-color: #999;
    border-bottom: none;
}

.caret.bar {
    position: relative;
    margin: 4px 0 0 5px;
}

.caret.bar::before {
    content: "";
    position: absolute;
    left: -4px;
    top: -8px;
    width: 8px;
    border-top: 1px solid #ddd;
}

/* 标题栏 */
.titlebar {
    display: flex;
    align-items: center;
    height: 28px;
    padding-bottom: 6px;
    background-color: #212830;
}

.quick {
    display: flex;
    align-items: center;
    gap: 6px;
    width: 239px;
    padding-left: 5px;
}

.quick svg {
    width: 18px;
}

.quick .caret {
    margin-right: 3px;
}

.quick .logo {
    margin-right: -4px;
}

.quick .logo + .caret {
    margin-right: 11px;
}

.quick .caret.small {
    margin: 0 -1px;
}

.workspace {
    width: 179px;
    height: 20px;
    padding-left: 3px;
    background-color: #3b4453;
}

.workspace select {
    padding: 0 1px;
}

.share {
    display: flex;
    align-items: center;
    gap: 5px;
    margin-left: 8px;
    color: #6cb8f0;
}

.title {
    flex: 1;
    padding-right: 20px;
    text-align: center;
}

.title span {
    margin-left: 16px;
}

.win-buttons {
    display: flex;
    gap: 10px;
    padding: 2px 6px 0 0;
}

.win-buttons button {
    border: none;
    background: none;
}

.win-buttons svg {
    width: 14px;
}

/* 功能区 */
.ribbon {
    display: flex;
    height: 119px;
}

.ribbon-left {
    flex: 1;
    min-width: 0;
    display: flex;
    flex-direction: column;
}

.ribbon-tabs {
    display: flex;
    align-items: stretch;
    height: 20px;
    padding-left: 2px;
    overflow: hidden;
    background-color: #212830;
    color: #b9bdc2;
    line-height: 22px;
}

.ribbon-tabs a {
    padding: 0 10px;
}

.ribbon-tabs .active {
    background-color: #3b4453;
    color: #fff;
    font-weight: 500;
}

.ribbon-tabs .more {
    width: 42px;
    height: 10px;
    margin: 6px 0 0 4px;
}

.ribbon-body {
    flex: 1;
    display: flex;
}

.ribbon-group {
    display: flex;
    flex-direction: column;
    justify-content: space-between;
    padding: 8px 5px 1px 6px;
    border-right: 1px solid #2a313c;
}

.ribbon-group + .ribbon-group {
    border: none;
}

.ribbon-group h3 {
    text-align: center;
}

.tools {
    display: flex;
    gap: 7px;
}

.tools button {
    flex-direction: column;
    gap: 3px;
    border: none;
    background: none;
    color: #6f7682;
}

.tools svg {
    width: 32px;
    height: 32px;
}

.display-panel {
    display: flex;
    flex-direction: column;
    width: 280px;
    background-color: #3c3c3c;
}

.layout-line {
    display: flex;
    align-items: center;
    gap: 2px;
    height: 20px;
    background-color: #212830;
}

.layout-line label {
    width: 59px;
}

.layout-line .combo {
    flex: 1;
    height: 17px;
    background-color: #4d5a6e;
}

.layout-line svg {
    margin-right: 2px;
}

.panel-row {
    display: flex;
    gap: 2px;
    padding-top: 2px;
    height: 30px;
}

.panel-row + .panel-row {
    padding-top: 6px;
    height: 34px;
}

.panel-row button {
    flex: 1;
    gap: 4px;
}

.panel-row.wide {
    gap: 5px;
}

.panel-row.floors {
    gap: 0;
}

.panel-row .square {
    flex: none;
    width: 26px;
}

.panel-row .level {
    flex: none;
    gap: 10px;
    width: 72px;
}

.panel-row .apart {
    margin-left: auto;
}

.panel-row button > svg {
    width: 20px;
    height: 20px;
}

.panel-row .square .big {
    width: 24px;
    height: 24px;
}

.panel-row .caret {
    margin-left: 11px;
}

.wheel {
    width: 18px;
    height: 18px;
    margin-right: 3px;
    border-radius: 50%;
    background: radial-gradient(#fff, transparent 60%), conic-gradient(#f66, #d4f, #46f, #3df, #4e4, #fe4, #f66);
}

/* 文件标签 */
.file-tabs {
    display: flex;
    height: 30px;
    padding: 4px 0 0 14px;
    border-bottom: 4px solid #3b4453;
    background-color: #212830;
    color: #c3c7cc;
}

.file-tabs a {
    display: flex;
    align-items: center;
    justify-content: space-between;
    width: 134px;
    margin-right: -11px;
    padding: 0 18px;
    background-color: #2f3643;
    clip-path: polygon(12px 0, calc(100% - 12px) 0, calc(100% - 6px) 6px, 100% 100%, 0 100%, 7px 6px);
}

.file-tabs .active {
    background-color: #3b4453;
    color: #fff;
    font-weight: bold;
}

.file-tabs svg {
    width: 10px;
    height: 10px;
}

.new-tab {
    width: 21px;
    height: 18px;
    margin: 3px 0 0 14px;
    border: none;
    border-radius: 3px 9px 9px 9px;
    background-color: #2f3643;
    font-size: 16px;
}

/* 工具条 */
.toolbar {
    display: flex;
    align-items: center;
    gap: 10px;
    height: 26px;
    padding-left: 10px;
    border-top: 1px solid #000;
    background-color: #3c3c3c;
}

.toolbar button {
    height: 24px;
    padding: 0 11px;
}

.toolbar .on {
    border-color: #6a86e8;
    background-color: #446fff;
}

.toolbar .flat {
    gap: 7px;
    padding: 0;
    border: none;
    background: none;
}

.toolbar button:not(.flat) + .flat {
    margin-left: 4px;
}

.toolbar .after-flat {
    margin-left: 6px;
}

.toolbar .settings {
    margin: 0 13px 0 auto;
}

.workarea {
    flex: 1;
    min-height: 0;
    display: flex;
    gap: 2px;
    padding-top: 4px;
}

/* 视图控制面板 */
.view-panel {
    display: flex;
    flex-direction: column;
    width: 343px;
    padding-top: 2px;
    margin-bottom: 4px;
}

.view-panel h2 {
    height: 22px;
    padding-left: 6px;
    border-radius: 3px 3px 0 0;
    background-color: #2d333f;
}

.view-panel h2::before {
    content: "";
    display: inline-block;
    width: 4px;
    height: 10px;
    margin-right: 5px;
    background: repeating-linear-gradient(#aaa 0 1px, transparent 1px 3px);
}

.filters {
    display: flex;
    align-items: center;
    gap: 5px;
    height: 50px;
    margin-top: 1px;
    padding-left: 2px;
    background-color: #3c3c3c;
}

.boxed {
    width: 80px;
    height: 28px;
    border: 1px solid #666;
    background-color: #333;
}

.search {
    width: 86px;
    color: #aaa;
}

.filters label {
    display: flex;
    align-items: center;
    gap: 4px;
}

.filters input {
    appearance: none;
    width: 14px;
    height: 14px;
    border: 1px solid #666;
    border-radius: 50%;
    background-color: #333;
}

.filters input:checked {
    border: 3px solid #333;
    outline: 1px solid #777;
    outline-offset: -1px;
    background-color: #fff;
}

.menu {
    flex-direction: column;
    gap: 3px;
    width: 20px;
    height: 20px;
}

.menu i {
    width: 16px;
    border-top: 2px solid #eee;
}

.tree-box {
    flex: 1;
    min-height: 0;
    display: flex;
    border: 1px solid #3c3c3c;
    border-width: 0 1px;
    overflow: hidden;
    background-color: #282828;
}

.tree {
    flex: 1;
    overflow: hidden;
}

.tree ul {
    padding-left: 20px;
}

.tree li {
    position: relative;
}

.tree li::before {
    content: "";
    position: absolute;
    left: 9px;
    top: 0;
    bottom: 0;
    border-left: 1px solid #666;
}

.tree li li:last-child::before {
    bottom: auto;
    height: 16px;
}

.tree li:not(:first-child)::after,
.tree li li::after {
    content: "";
    position: absolute;
    left: 10px;
    top: 15px;
    width: 10px;
    border-top: 1px solid #666;
}

.row {
    display: flex;
    align-items: center;
    height: 32px;
}

.row label {
    display: flex;
    align-items: center;
    flex: 1;
}

.row label svg {
    margin: 0 6px 0 5px;
}

.selected {
    margin-left: -20px;
    padding-left: 20px;
    background-color: #446fff;
    color: #fff;
    font-weight: bold;
}

.exp {
    flex: none;
    width: 23px;
    height: 8px;
    border: none;
    background: none;
}

button.exp {
    position: relative;
    z-index: 1;
    justify-content: flex-start;
    padding-left: 7px;
}

button.exp::before {
    content: "";
    width: 6px;
    height: 6px;
    background-color: #fff;
    clip-path: polygon(100% 0, 100% 100%, 0 100%);
}

.row input {
    appearance: none;
    width: 14px;
    height: 14px;
    border: 1px solid #666;
}

.row input:disabled {
    border-color: #3d3d3d;
}

.row input:checked::before {
    content: "";
    display: block;
    width: 4px;
    height: 8px;
    margin-left: 4px;
    border: solid #888;
    border-width: 0 2px 2px 0;
    transform: rotate(40deg);
}

.selected input:checked {
    border-color: #5a6494;
    background-color: #3f56b0;
}

.selected input:checked::before {
    border-color: #aeb8e8;
}

.star {
    margin-right: 2px;
}

.row-icons {
    display: flex;
    gap: 12px;
    margin-right: 3px;
}

.scroll {
    display: flex;
    flex-direction: column;
    width: 16px;
}

.scroll svg {
    height: 38px;
    background-color: #3c3c3c;
}

.track {
    flex: 1;
    display: flex;
    flex-direction: column;
    justify-content: flex-end;
    padding: 0 1px 131px;
}

.thumb {
    height: 71%;
    border: 1px solid #4e4e4e;
    background-color: #3c3c3c;
}

.view-buttons {
    display: flex;
    align-items: center;
    gap: 16px;
    height: 57px;
    padding: 0 0 2px 2px;
    border-top: 1px solid #888;
    background-color: #3c3c3c;
}

.wrench {
    width: 36px;
    height: 36px;
    margin-right: -4px;
    border: none;
    border-radius: 6px;
}

.wrench svg {
    width: 30px;
    height: 30px;
}

.split {
    display: flex;
    height: 33px;
}

.split button {
    gap: 6px;
    width: 95px;
}

.split button svg {
    width: 22px;
    height: 22px;
}

.split .up {
    width: 28px;
    margin-left: -1px;
}

.split .up svg {
    width: 12px;
    height: 16px;
}

/* 绘图区 */
.center {
    flex: 1;
    min-width: 0;
    display: flex;
    flex-direction: column;
}

.canvas {
    position: relative;
    flex: 1;
    display: flex;
    flex-direction: column;
    justify-content: space-between;
    background-color: #212830;
}

.view-head {
    display: flex;
    justify-content: space-between;
    padding: 6px 9px 0 3px;
}

.view-head svg {
    width: 52px;
    height: 14px;
    margin-top: 1px;
}

.compass {
    position: absolute;
    right: 43px;
    top: 40px;
    width: 80px;
    height: 80px;
}

.view-note {
    padding-bottom: 7px;
    color: #fff;
    font-family: "Liberation Sans", "Noto Sans CJK SC", sans-serif;
    font-size: 18px;
    font-weight: 300;
    line-height: 24px;
    text-align: center;
}

/* 楼层信息 */
.dialog {
    position: absolute;
    left: 7px;
    top: 58px;
    display: flex;
    flex-direction: column;
    width: 983px;
    height: 571px;
    padding: 0 15px;
    border: 1px solid #0e76c8;
    background-color: #3c3c3c;
    box-shadow: 0 0 6px 1px #a01820;
    color: #fff;
}

.dlg-title {
    display: flex;
    align-items: center;
    height: 42px;
    margin: 0 -15px;
    padding: 0 11px 8px 5px;
}

.dlg-title h2 {
    flex: 1;
    padding-left: 5px;
}

.dlg-title button {
    margin-bottom: 6px;
    border: none;
    background: none;
}

.dlg-title .help {
    margin-right: 23px;
    color: #2fb4f0;
    font-size: 20px;
    font-weight: bold;
}

.dlg-title button svg {
    width: 12px;
    height: 12px;
}

.dlg-tabs {
    display: flex;
    height: 24px;
    line-height: 26px;
}

.dlg-tabs a {
    padding: 0 12px;
}

.dlg-tabs .active {
    z-index: 1;
    padding: 0 11px;
    border: 1px solid #666;
    border-top: 2px solid #446fff;
    border-bottom: none;
    background-color: #282828;
    color: #446fff;
    line-height: 22px;
}

.dlg-body {
    flex: 1;
    display: flex;
    margin-top: -1px;
    padding: 12px;
    border: 1px solid #666;
    background-color: #282828;
}

.grid-box {
    flex: 1;
    display: flex;
    flex-direction: column;
    border: 1px solid #666;
}

.grid-view {
    flex: 1;
    display: flex;
    align-items: flex-start;
}

.levels {
    flex: 1;
    width: 100%;
    table-layout: fixed;
    border-spacing: 0;
}

.levels th,
.levels td {
    height: 32px;
    padding: 0;
    border-right: 1px solid #666;
    border-bottom: 1px solid #666;
    color: #119be0;
    font-weight: normal;
    text-align: center;
}

.levels th,
.levels .name,
.levels .none {
    color: #fff;
}

.levels .mark,
.levels thead th {
    background-color: #4b4b4b;
}

.levels .mark {
    width: 16px;
}

.levels .name {
    width: 126px;
}

.levels tbody tr:nth-child(even) {
    background-color: #313131;
}

.levels .current::before {
    content: "";
    display: block;
    margin-left: 6px;
    width: 4px;
    height: 8px;
    background-color: #fff;
    clip-path: polygon(0 0, 100% 50%, 0 100%);
}

.grid-scroll {
    flex: none;
    align-self: stretch;
    display: flex;
    flex-direction: column;
    justify-content: space-between;
    align-items: center;
    width: 17px;
    padding: 38px 0 5px;
    background: linear-gradient(#666, #666) 0 31px / 100% 1px no-repeat, #4b4b4b;
}

.grid-scroll i {
    border: 4px solid transparent;
    border-top: none;
    border-bottom-color: #aaa;
}

.grid-scroll .down {
    border-top: 4px solid #aaa;
    border-bottom: none;
}

.grid-foot {
    height: 31px;
    border-top: 1px solid #666;
}

.dlg-foot {
    display: flex;
    align-items: center;
    height: 54px;
    margin-bottom: 3px;
}

.dlg-foot label {
    width: 50px;
}

.dlg-foot input {
    width: 262px;
    height: 22px;
    padding: 0 4px;
    border: 1px solid #666;
    background-color: #333;
}

.dlg-foot button {
    gap: 6px;
    width: 92px;
    height: 32px;
}

.dlg-foot .ok {
    margin: 0 76px 0 auto;
}

.dlg-foot button svg {
    width: 20px;
    height: 20px;
}

/* 右侧对照窗口 */
.inset {
    position: absolute;
    left: 996px;
    top: 52px;
    display: flex;
    flex-direction: column;
    width: 562px;
    height: 568px;
    border: 5px solid #fff;
    overflow: hidden;
    background-color: #fff;
    color: #444;
    font-size: 9px;
    line-height: 12px;
}

.in-tabs {
    display: flex;
    align-items: center;
    gap: 23px;
    height: 18px;
    background-color: #a0a0a0;
    color: #2250d8;
    font-size: 10px;
    font-weight: bold;
}

.in-tabs span:first-child {
    margin-left: -3px;
}

.in-tabs svg {
    width: 12px;
    height: 8px;
    margin-bottom: 4px;
}

.in-ribbon {
    display: flex;
    height: 57px;
    border-bottom: 1px solid #ccc;
    background: linear-gradient(#b4b4b4, #e4e4e4);
}

.in-on {
    width: 7px;
    border: 1px solid #5a9ad8;
    background-color: #bfdcf5;
}

.in-ribbon button {
    flex-direction: column;
    justify-content: flex-start;
    width: 49px;
    padding-top: 2px;
    border: none;
    border-right: 1px solid #d4d4d4;
    background-color: #fafafa;
    line-height: 12px;
}

.in-ribbon .first {
    width: 42px;
}

.in-ribbon .last {
    width: 35px;
}

.in-ribbon button svg {
    width: 24px;
    height: 24px;
    margin-bottom: 3px;
}

.in-ribbon button i {
    margin-top: 9px;
    border: 4px solid transparent;
    border-top-color: #1e7a1e;
    border-bottom: none;
}

.in-ribbon button .blue {
    border-top-color: #2a7ad8;
}

.in-lists {
    display: grid;
    grid-template-columns: 88px 86px 70px 78px 68px 89px 1fr;
    height: 69px;
    padding: 1px 0 0 12px;
    background-color: #fff;
}

.in-lists li {
    display: flex;
    align-items: center;
    height: 17px;
    padding-left: 19px;
    background: radial-gradient(circle, #555 1px, transparent 1px) 5px 7px / 4px 4px no-repeat;
}

.in-lists .pic {
    padding-left: 1px;
    background: none;
}

.in-lists .pic svg {
    width: 12px;
    height: 12px;
    margin-right: 6px;
}

.in-lists .hot {
    position: relative;
    margin-right: 8px;
    border: 1px solid #5a8ab8;
    background-color: #b4d6f2;
    padding-left: 18px;
}

.in-lists .hot::after,
.in-dtabs .hot::after {
    content: "";
    position: absolute;
    inset: -4px -6px;
    border: 2px dashed #e81010;
}

.in-close {
    height: 15px;
    padding: 1px 12px 0 0;
    border-bottom: 1px solid #aaa;
    background-color: #ededed;
    text-align: center;
}

.in-stage {
    flex: 1;
    display: flex;
    padding: 4px 7px 6px;
    background-color: #212830;
}

.in-dialog {
    flex: 1;
    display: flex;
    flex-direction: column;
    background-color: #f0f0f0;
    color: #222;
}

.in-title {
    display: flex;
    align-items: center;
    gap: 4px;
    height: 24px;
    padding: 0 11px 0 6px;
    background-color: #fff;
}

.in-title svg {
    width: 12px;
    height: 10px;
}

.in-title .ctl {
    width: 90px;
    height: 12px;
    margin-left: auto;
}

.in-dtabs {
    display: flex;
    height: 18px;
    padding-left: 1px;
    line-height: 17px;
}

.in-dtabs span {
    padding: 0 5px;
    border-right: 1px solid #d8d8d8;
}

.in-dtabs .hot {
    position: relative;
    background-color: #fff;
    line-height: 15px;
}

.in-dtabs .hot::after {
    inset: -2px -1px -1px -2px;
}

.in-grid {
    flex: 1;
    margin: 0 1px;
    padding: 1px;
    border: 1px solid #777;
    background-color: #a0a0a0;
}

.in-grid table {
    width: 524px;
    table-layout: fixed;
    border-collapse: collapse;
    background-color: #fff;
}

.in-grid col {
    width: 41px;
}

.in-grid .c-name {
    width: 68px;
}

.in-grid .c-mid {
    width: 51px;
}

.in-grid .c-wide {
    width: 54px;
}

.in-grid th,
.in-grid td {
    height: 21px;
    padding: 0 0 0 3px;
    border: 1px solid #d0d0d0;
    border-width: 0 1px 1px 0;
    font-weight: normal;
    text-align: left;
}

.in-grid th {
    border-color: #888;
    background-color: #f0f0f0;
}

.in-grid thead th {
    height: 20px;
}

.in-grid .tower {
    text-align: center;
}

.in-grid .combo {
    height: 20px;
}

.in-grid select {
    padding: 0;
}

.in-grid .combo::before {
    content: "";
    position: absolute;
    right: 0;
    top: 1px;
    width: 12px;
    height: 13px;
    border: 1px solid #777;
    border-width: 0 1px 1px 0;
    background-color: #eee;
    pointer-events: none;
}

.in-grid .combo::after {
    right: 3px;
    top: 6px;
    margin: 0;
    border-top-color: #000;
    border-width: 3px 3px 0;
}

.in-foot {
    display: grid;
    grid-template-columns: 196px 57px 57px;
    gap: 8px;
    align-items: center;
    height: 32px;
    padding-left: 6px;
}

.in-foot span {
    color: #f02020;
}

.in-foot button {
    height: 16px;
    border-color: #adadad;
    background-color: #e1e1e1;
}

.in-foot .default {
    border: 2px solid #0078d7;
}

/* 命令行 */
.command {
    display: flex;
    height: 60px;
    padding-top: 3px;
}

.cmd-side {
    width: 25px;
    height: 57px;
    background-color: #2d333f;
}

.cmd-main {
    flex: 1;
    color: #111;
    font-family: "Liberation Mono", "Noto Sans CJK SC", monospace;
}

.cmd-log {
    height: 35px;
    padding: 3px 2px;
    border-bottom: 1px solid #333;
    background-color: #c6c6c6;
}

.cmd-log p {
    line-height: 15px;
}

.cmd-line {
    display: flex;
    align-items: center;
    height: 21px;
    padding-left: 3px;
    background-color: #fff;
}

.cmd-line svg {
    width: 26px;
    height: 14px;
}

.cmd-line input {
    flex: 1;
    height: 18px;
    padding: 2px 2px 0;
    border: none;
    outline: none;
    background: none;
}

/* 状态栏 */
.status {
    display: flex;
    justify-content: space-between;
    height: 27px;
    background-color: #212830;
}

.layouts {
    display: flex;
    height: 18px;
    padding-left: 12px;
    color: #a8adb4;
    line-height: 18px;
}

.layouts a {
    width: 54px;
    margin-right: -1px;
    background-color: #2b323d;
    clip-path: polygon(0 0, 100% 0, calc(100% - 6px) 100%, 8px 100%);
    text-align: center;
}

.layouts a.active {
    width: 48px;
    background-color: #3b4453;
    color: #fff;
    font-weight: bold;
}

.layouts button {
    width: 22px;
    height: 15px;
    margin-left: 6px;
    border: none;
    border-radius: 3px 3px 8px 8px;
    background-color: #2b323d;
    font-size: 16px;
}

.status-items {
    display: flex;
    align-items: stretch;
    height: 24px;
    margin-top: 2px;
    padding-right: 7px;
    background-color: #3b4453;
}

.status-items > * {
    display: flex;
    align-items: center;
    justify-content: center;
}

.status-items .coords {
    justify-content: flex-end;
    width: 207px;
    padding-right: 2px;
}

.cell {
    width: 25px;
}

.cell svg {
    width: 19px;
    height: 19px;
}

.cell .g16 {
    width: 16px;
    height: 16px;
}

.cell.on {
    border: solid #3b4453;
    border-width: 0 1px;
    background-color: #5a8bc4;
}

.cell.dim {
    background-color: #4c6c96;
}

.cell.light {
    color: #ccc;
}

.slab {
    width: 20px;
    height: 18px;
    background-color: #c8c8f0;
    clip-path: polygon(4px 0, 100% 0, calc(100% - 4px) 100%, 0 100%);
    color: #2a2ac8;
    font-size: 13px;
    font-style: italic;
    line-height: 18px;
    text-align: center;
}

.word {
    width: 34px;
    border-left: 1px solid #212830;
    border-right: 1px solid #212830;
}

.scale {
    width: 59px;
    border: none;
}

.drop {
    width: 16px;
}

.drop::before {
    content: "";
    border: 4px solid transparent;
    border-top-color: #ccc;
    border-bottom: none;
}

.units {
    width: 78px;
}

.units select {
    padding: 0 6px;
}
```
FILE: script.js
```js
const levels = ['基础面', '场地', '2层', '3层', '4层', '5层', '6层', '天面层'];
const oldLevels = ['1层(1标准层)', '2层(1标准层)', '3层(1标准层)', '4层(1标准层)', '5层(1标准层)', '6层(2标准层)'];
const grades = ['3级', '3级', '3级', '3级', '非抗震', '非抗震', '3级', '3级', '3级', '3级'];

document.getElementById('levels').innerHTML = levels.map((name, i) => {
    const cells = grades.map(g => `<td class="${g === '非抗震' ? 'none' : ''}">${g}</td>`).join('');
    return `<tr><td class="mark ${i === 0 ? 'current' : ''}"></td><td class="name">${name}</td>${cells}</tr>`;
}).join('');

document.getElementById('old-levels').innerHTML = oldLevels.map(name => {
    const cells = grades.map(g =>
        `<td><div class="combo"><select aria-label="${name}"><option>${g}</option></select></div></td>`).join('');
    return `<tr><th>${name}</th>${cells}</tr>`;
}).join('');
```
